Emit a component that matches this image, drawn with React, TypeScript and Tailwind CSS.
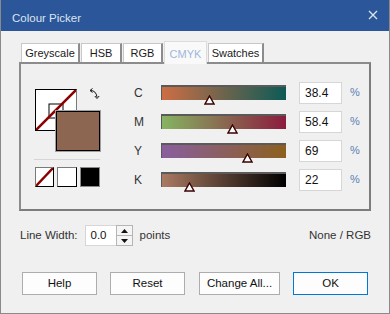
import React from "react";

const font = "font-['Segoe_UI','Liberation_Sans',Arial,sans-serif]";

function Tab({ label, selected, w }: { label: string; selected?: boolean; w: string }) {
  if (selected) {
    return (
      <div className={`relative z-10 -mb-[2px] flex h-[23px] ${w} items-start justify-center border-l border-t border-r border-[#dcdcdc] bg-[#f9f9f9] pt-[4px] text-[#9fb7db]`}>
        {label}
      </div>
    );
  }
  return (
    <div className={`flex h-[19px] ${w} items-center justify-center border-l border-t border-[#c8c8c8] border-r-2 border-r-[#8c8c8c] bg-white pt-[1px] text-[#1a1a1a]`}>
      {label}
    </div>
  );
}

function Slider({
  label,
  value,
  pos,
  from,
  to,
}: {
  label: string;
  value: string;
  pos: number;
  from: string;
  to: string;
}) {
  return (
    <div className="flex h-[29px] items-center">
      <div className="w-[28px] text-[12px] text-[#333] pl-[1px]">{label}</div>
      <div className="relative h-[15px] w-[125px] border-t-2 border-l border-[#5a5a5a]" style={{ background: `linear-gradient(to right, ${from}, ${to})` }}>
        <svg
          className="absolute top-[8px]"
          style={{ left: `calc(${pos}% - 6px)` }}
          width="11"
          height="10"
          viewBox="0 0 11 10"
        >
          <polygon points="5.5,1 10,9 1,9" fill="white" stroke="#3a0000" strokeWidth="1.4" />
        </svg>
      </div>
      <div className="ml-[13px] flex h-[22px] w-[43px] items-center border border-[#d6d6d6] bg-white pl-[5px] text-[12px] text-[#111]">{value}</div>
      <div className="ml-[8px] text-[#5b7fb5]">%</div>
    </div>
  );
}

function Button({ label, primary, w }: { label: string; primary?: boolean; w: string }) {
  return (
    <div
      className={`flex h-[23px] items-center justify-center bg-[#fdfdfd] text-[#111] ${w} ${
        primary ? "border border-[#0078d7]" : "border border-[#adadad]"
      }`}
    >
      {label}
    </div>
  );
}

export default function App() {
  return (
    <div className={`${font} text-[11px] w-[390px] h-[314px] overflow-hidden bg-[#f0f0f0] border-x border-b border-[#8a8a8a] flex flex-col`}>
      {/* title bar */}
      <div className="flex h-[31px] shrink-0 items-center justify-between bg-[#2b579a] pl-[12px] pr-[12px] -mx-[1px]">
        <span className="text-[11.5px] text-[#dce4ef] mt-[7px]">Colour Picker</span>
        <svg width="10" height="10" viewBox="0 0 10 10" className="-mt-[2px]">
          <path d="M1 1 L9 9 M9 1 L1 9" stroke="#dce4ef" strokeWidth="1.3" />
        </svg>
      </div>

      <div className="flex flex-col px-[18px]">
        {/* tabs */}
        <div className="mt-[10px] flex h-[21px] items-end gap-[1px] pl-[2px] text-[11px]">
          <Tab label="Greyscale" w="w-[59px]" />
          <Tab label="HSB" w="w-[41px]" />
          <Tab label="RGB" w="w-[40px]" />
          <Tab label="CMYK" selected w="w-[43px]" />
          <Tab label="Swatches" w="w-[56px]" />
        </div>

        {/* panel */}
        <div className="flex h-[149px] w-[352px] border-2 border-[#7c7c7c] border-l-[#8c8c8c] border-t-[#8c8c8c]">
          {/* left column */}
          <div className="ml-[14px] mt-[25px] flex w-[66px] flex-col">
            <div className="relative h-[62px] w-[65px]">
              <div className="absolute left-0 top-0 h-[42px] w-[42px] overflow-hidden border border-black border-r-[#7a7a7a] bg-white">
                <svg width="42" height="42" viewBox="0 0 42 42" className="absolute -left-[1px] -top-[1px]">
                  <rect x="14" y="15" width="14" height="14" fill="none" stroke="#000" strokeWidth="1" />
                  <line x1="1" y1="41" x2="41" y2="1" stroke="#8b0000" strokeWidth="2.6" />
                </svg>
              </div>
              <div className="absolute left-[21px] top-[22px] h-[40px] w-[44px] border border-black bg-[#8c6650] outline outline-1 outline-[#a0a0a0]" />
              <svg className="absolute left-[54px] top-[-1px]" width="11" height="12" viewBox="0 0 11 12">
                <path d="M1.5 2.5 Q7 2.5 8 9" fill="none" stroke="#111" strokeWidth="1" />
                <path d="M1 2.5 L3.5 0.5 M1 2.5 L3.5 4.5" stroke="#111" strokeWidth="1" fill="none" />
                <path d="M8 10.5 L5.8 8 M8 10.5 L10.2 8" stroke="#111" strokeWidth="1" fill="none" />
              </svg>
            </div>
            <div className="mt-[8px] h-[1px] w-[66px] -ml-[1px] bg-[#d6d6d6]" />
            <div className="mt-[7px] flex gap-[3px]">
              <div className="relative h-[20px] w-[19px] overflow-hidden border border-black border-t-[#7a7a7a] border-l-[#7a7a7a] bg-white">
                <svg width="19" height="20" viewBox="0 0 19 20" className="absolute -left-[1px] -top-[1px]">
                  <line x1="1" y1="19" x2="18" y2="1" stroke="#8b0000" strokeWidth="2.4" />
                </svg>
              </div>
              <div className="h-[20px] w-[20px] border border-black border-t-[#7a7a7a] border-l-[#7a7a7a] bg-white" />
              <div className="h-[20px] w-[20px] border border-[#8a8a8a] bg-black" />
            </div>
          </div>

          {/* sliders */}
          <div className="ml-[32px] mt-[14px] flex flex-col">
            <Slider label="C" value="38.4" pos={38.4} from="#cd6e44" to="#0c5a56" />
            <Slider label="M" value="58.4" pos={57.6} from="#86b462" to="#8c1c3e" />
            <Slider label="Y" value="69" pos={69} from="#8a5e9e" to="#8c601e" />
            <Slider label="K" value="22" pos={22.4} from="#aa7a62" to="#000000" />
          </div>
        </div>

        {/* line width row */}
        <div className="mt-[14px] flex h-[21px] items-center text-[11.5px]">
          <span className="ml-[1px] text-[#333]">Line Width:</span>
          <div className="ml-[7px] flex h-[21px] w-[31px] items-center border border-[#d6d6d6] border-r-0 bg-white pl-[5px] text-[#111]">0.0</div>
          <div className="flex h-[21px] w-[17px] flex-col border border-[#b5b5b5]">
            <div className="flex h-[10px] items-center justify-center border-b border-[#b5b5b5] bg-[#f5f5f5]">
              <svg width="7" height="4" viewBox="0 0 7 4"><polygon points="3.5,0 7,4 0,4" fill="#111" /></svg>
            </div>
            <div className="flex flex-1 items-center justify-center bg-[#f5f5f5]">
              <svg width="7" height="4" viewBox="0 0 7 4"><polygon points="0,0 7,0 3.5,4" fill="#111" /></svg>
            </div>
          </div>
          <span className="ml-[7px] text-[#333]">points</span>
          <span className="ml-auto mr-[0px] text-[#333]">None / RGB</span>
        </div>

        {/* buttons */}
        <div className="mt-[26px] flex pl-[3px] text-[11.5px]">
          <Button label="Help" w="w-[75px]" />
          <div className="w-[13px]" />
          <Button label="Reset" w="w-[75px]" />
          <div className="w-[14px]" />
          <Button label="Change All..." w="w-[81px]" />
          <div className="w-[13px]" />
          <Button label="OK" primary w="w-[75px]" />
        </div>
      </div>
    </div>
  );
}
